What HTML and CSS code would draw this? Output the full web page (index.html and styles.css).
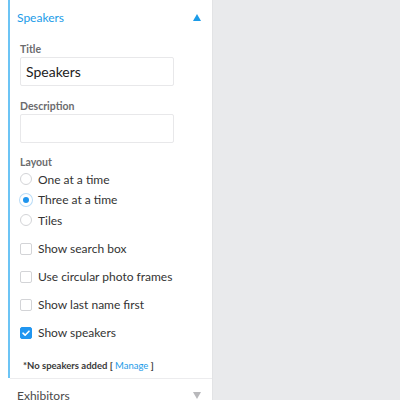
FILE: index.html
```html
<!DOCTYPE html>
<html>
<head>
<meta charset="utf-8">
<link rel="stylesheet" href="styles.css">
</head>
<body>
<div class="panel">
  <div class="section active">
    <div class="sec-head">
      <span class="sec-title">Speakers</span>
      <span class="tri up"></span>
    </div>
    <div class="sec-body">
      <label class="lbl">Title</label>
      <div class="input">Speakers</div>
      <label class="lbl lbl-desc">Description</label>
      <div class="input"></div>
      <label class="lbl lbl-layout">Layout</label>
      <div class="opts radios">
        <div class="opt"><span class="radio"></span>One at a time</div>
        <div class="opt"><span class="radio on"></span>Three at a time</div>
        <div class="opt"><span class="radio"></span>Tiles</div>
      </div>
      <div class="opts checks">
        <div class="opt"><span class="check"></span>Show search box</div>
        <div class="opt"><span class="check"></span>Use circular photo frames</div>
        <div class="opt"><span class="check"></span>Show last name first</div>
        <div class="opt"><span class="check on"><svg viewBox="0 0 12 12" width="12" height="12"><path d="M3 6.2 L5.1 8.2 L9 4.2" fill="none" stroke="#fff" stroke-width="1.6" stroke-linecap="round" stroke-linejoin="round"/></svg></span>Show speakers</div>
      </div>
      <div class="note">*No speakers added [ <span class="link">Manage</span> ]</div>
    </div>
  </div>
  <div class="section">
    <div class="sec-head">
      <span class="sec-title dark">Exhibitors</span>
      <span class="tri down"></span>
    </div>
  </div>
</div>
<div class="canvas"></div>
</body>
</html>
```
FILE: styles.css
```css
html, body { margin: 0; padding: 0; height: 100%; }
body {
  display: flex;
  background: #e9eaec;
  font-family: Lato, "Open Sans", sans-serif;
  overflow: hidden;
}
.panel {
  width: 213px;
  flex: none;
  background: #fff;
  padding-left: 8px;
  box-sizing: border-box;
  border-right: 1px solid #e2e3e5;
}
.canvas { flex: 1; }
.section.active { border-left: 2px solid #6cc4f5; }
.section + .section { border-top: 1px solid #ececee; margin-left: 2px; }
.sec-head {
  display: flex;
  align-items: center;
  justify-content: space-between;
  height: 34px;
  padding: 0 11px 0 7px;
}
.sec-title { font-size: 12px; color: #1b9be8; }
.sec-title.dark { color: #4a4a4a; }
.tri { width: 0; height: 0; border-left: 4.5px solid transparent; border-right: 4.5px solid transparent; }
.tri.up { border-bottom: 7px solid #1b9be8; }
.tri.down { border-top: 7px solid #b8b8bb; }
.sec-body { padding: 8px 0 7px 10px; }
.lbl { display: block; font-size: 10.5px; font-weight: bold; color: #6b6b6d; line-height: 14px; }
.lbl-desc { margin-top: 13px; }
.lbl-layout { margin-top: 12px; }
.input {
  margin-top: 1px;
  width: 154px;
  height: 29px;
  box-sizing: border-box;
  border: 1px solid #e8e8ea;
  border-radius: 2px;
  padding: 0 5px;
  font-size: 14px;
  line-height: 27px;
  color: #222;
}
.opts { display: flex; flex-direction: column; }
.radios { gap: 0; margin-top: 0; }
.radios .opt { height: 20.5px; }
.checks { margin-top: 8px; gap: 8px; }
.checks .opt { height: 20px; }
.opt { display: flex; align-items: center; font-size: 12px; color: #333; }
.radio {
  width: 12px; height: 12px; box-sizing: border-box;
  border: 1px solid #d3d4d7; border-radius: 50%;
  margin-right: 6px; flex: none;
}
.radio.on { border: 3px solid #fff; background: #1e95ee; box-shadow: 0 0 0 1px #b9dcf7; }
.check {
  width: 12px; height: 12px; box-sizing: border-box;
  border: 1px solid #d3d4d7; border-radius: 2px;
  margin-right: 6px; flex: none; display: flex;
}
.check.on { background: #2196f0; border-color: #2196f0; }
.check.on svg { margin: -1px; }
.note { margin-top: 17px; margin-left: 3px; font-size: 9.5px; font-weight: bold; color: #3a3a3a; }
.note .link { color: #1b9be8; font-weight: normal; }
```
